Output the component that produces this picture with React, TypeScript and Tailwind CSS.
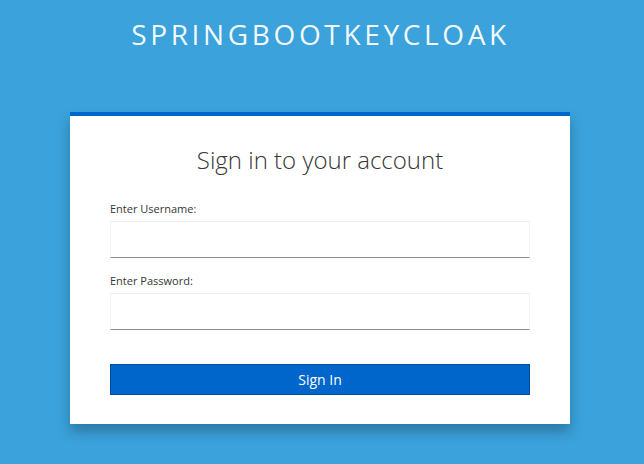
export default function App() {
  return (
    <div className="min-h-[464px] w-full bg-[#3ba2db] flex flex-col items-center" style={{ fontFamily: '"Open Sans", "Liberation Sans", sans-serif' }}>
      <h1 className="mt-[17px] mr-[3px] text-[28px] leading-[34px] font-normal tracking-[0.13em] text-white/95">SPRINGBOOTKEYCLOAK</h1>

      <div className="mt-[61px] mr-[4px] w-[500px] bg-white border-t-4 border-[#0066cc] shadow-[0_8px_12px_rgba(0,0,0,0.25)] px-10 pt-[27px] pb-[29px]">
        <h2 className="text-center text-[24px] leading-[34px] font-light text-[#363636]">Sign in to your account</h2>

        <div className="mt-[25px]">
          <label className="block text-[11px] leading-[14px] text-[#363636]">Enter Username:</label>
          <div className="mt-[5px] h-[37px] border border-[#f0f0f0] border-b-[#8a8d90]" />
        </div>

        <div className="mt-[16px]">
          <label className="block text-[11px] leading-[14px] text-[#363636]">Enter Password:</label>
          <div className="mt-[5px] h-[37px] border border-[#f0f0f0] border-b-[#8a8d90]" />
        </div>

        <button className="mt-[34px] w-full h-[31px] bg-[#0066cc] border border-[#004f9e] text-white text-[14px] leading-[29px]">Sign In</button>
      </div>
    </div>
  );
}
